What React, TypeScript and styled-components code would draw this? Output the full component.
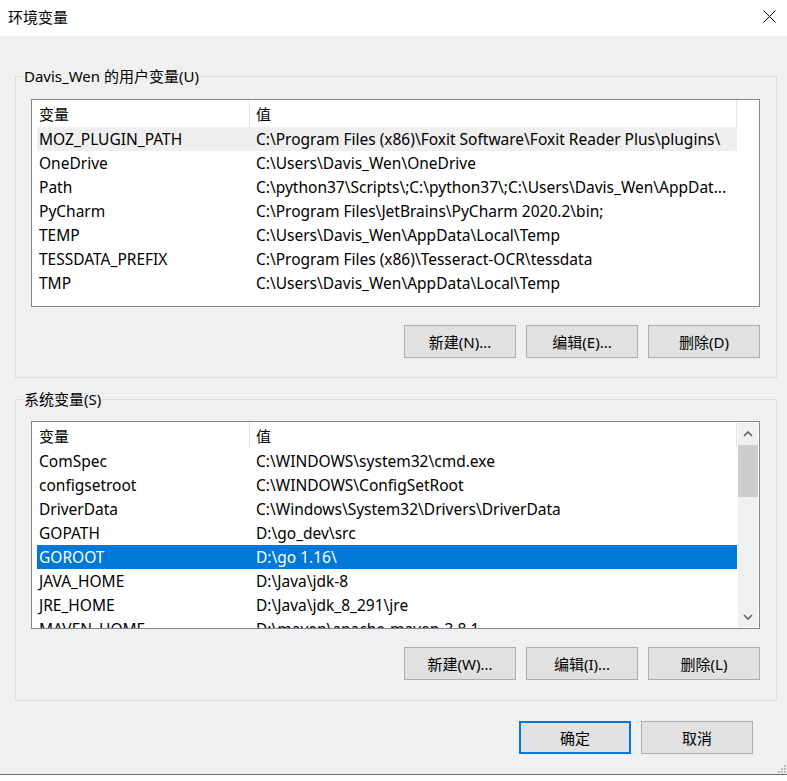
import React from "react";
import styled, { createGlobalStyle } from "styled-components";

type EnvVar = { name: string; value: string };
type RowState = "none" | "dim" | "active";

const userVars: EnvVar[] = [
  { name: "MOZ_PLUGIN_PATH", value: "C:\\Program Files (x86)\\Foxit Software\\Foxit Reader Plus\\plugins\\" },
  { name: "OneDrive", value: "C:\\Users\\Davis_Wen\\OneDrive" },
  { name: "Path", value: "C:\\python37\\Scripts\\;C:\\python37\\;C:\\Users\\Davis_Wen\\AppDat..." },
  { name: "PyCharm", value: "C:\\Program Files\\JetBrains\\PyCharm 2020.2\\bin;" },
  { name: "TEMP", value: "C:\\Users\\Davis_Wen\\AppData\\Local\\Temp" },
  { name: "TESSDATA_PREFIX", value: "C:\\Program Files (x86)\\Tesseract-OCR\\tessdata" },
  { name: "TMP", value: "C:\\Users\\Davis_Wen\\AppData\\Local\\Temp" },
];

const systemVars: EnvVar[] = [
  { name: "ComSpec", value: "C:\\WINDOWS\\system32\\cmd.exe" },
  { name: "configsetroot", value: "C:\\WINDOWS\\ConfigSetRoot" },
  { name: "DriverData", value: "C:\\Windows\\System32\\Drivers\\DriverData" },
  { name: "GOPATH", value: "D:\\go_dev\\src" },
  { name: "GOROOT", value: "D:\\go 1.16\\" },
  { name: "JAVA_HOME", value: "D:\\Java\\jdk-8" },
  { name: "JRE_HOME", value: "D:\\Java\\jdk_8_291\\jre" },
  { name: "MAVEN_HOME", value: "D:\\maven\\apache-maven-3.8.1" },
];

const GlobalStyle = createGlobalStyle`
  body {
    margin: 0;
    background: #fff;
    font-family: "Noto Sans", "Noto Sans CJK SC", sans-serif;
    color: #000;
  }
  * { box-sizing: border-box; }
`;

const Chevron = ({ down }: { down?: boolean }) => (
  <svg width="10" height="6" viewBox="0 0 10 6">
    <polyline
      points={down ? "1,1 5,5 9,1" : "1,5 5,1 9,5"}
      fill="none"
      stroke="#606060"
      strokeWidth="1.6"
    />
  </svg>
);

const VarList = ({
  rows,
  selected,
  selState,
  scroll,
}: {
  rows: EnvVar[];
  selected: number;
  selState: RowState;
  scroll?: boolean;
}) => (
  <ListFrame>
    <ListBody>
      <HeaderRow>
        <HeaderCell $w={213} $pad={2}>变量</HeaderCell>
        <HeaderCell $w={487} $pad={6}>值</HeaderCell>
      </HeaderRow>
      {rows.map((r, i) => (
        <DataRow key={r.name} $state={i === selected ? selState : "none"}>
          <Cell $w={213} $pad={2}>{r.name}</Cell>
          <Cell $w={487} $pad={6}>{r.value}</Cell>
        </DataRow>
      ))}
    </ListBody>
    {scroll && (
      <ScrollBar>
        <ArrowBtn>
          <Chevron />
        </ArrowBtn>
        <Thumb />
        <Track />
        <ArrowBtn>
          <Chevron down />
        </ArrowBtn>
      </ScrollBar>
    )}
  </ListFrame>
);

const App = () => {
  return (
    <Window>
      <GlobalStyle />
      <TitleBar>
        <Title>环境变量</Title>
        <CloseBtn>
          <svg width="13" height="13" viewBox="0 0 13 13">
            <path d="M0.5 0.5 L12.5 12.5 M12.5 0.5 L0.5 12.5" stroke="#000" strokeWidth="1" />
          </svg>
        </CloseBtn>
      </TitleBar>
      <Body>
        <GroupBox>
          <GroupLabel>Davis_Wen 的用户变量(U)</GroupLabel>
          <VarList rows={userVars} selected={0} selState="dim" />
          <ButtonRow>
            <Button>新建(N)...</Button>
            <Button>编辑(E)...</Button>
            <Button>删除(D)</Button>
          </ButtonRow>
        </GroupBox>
        <GroupBox $gapTop={21} $padTop={21} $padBottom={20}>
          <GroupLabel>系统变量(S)</GroupLabel>
          <VarList rows={systemVars} selected={4} selState="active" scroll />
          <ButtonRow>
            <Button>新建(W)...</Button>
            <Button>编辑(I)...</Button>
            <Button>删除(L)</Button>
          </ButtonRow>
        </GroupBox>
        <Footer>
          <Button $primary>确定</Button>
          <Button>取消</Button>
          <Grip>
            <svg width="10" height="10" viewBox="0 0 10 10">
              <rect x="7" y="1" width="2" height="2" fill="#bcbcbc" />
              <rect x="4" y="4" width="2" height="2" fill="#bcbcbc" />
              <rect x="7" y="4" width="2" height="2" fill="#bcbcbc" />
              <rect x="1" y="7" width="2" height="2" fill="#bcbcbc" />
              <rect x="4" y="7" width="2" height="2" fill="#bcbcbc" />
              <rect x="7" y="7" width="2" height="2" fill="#bcbcbc" />
            </svg>
          </Grip>
        </Footer>
      </Body>
    </Window>
  );
};

const Window = styled.div`
  width: 787px;
  display: flex;
  flex-direction: column;
  border-bottom: 1px solid #6e6e6e;
  box-shadow: 0 1px 0 #c8c8c8;
`;

const TitleBar = styled.div`
  height: 36px;
  background: #fff;
  display: flex;
  align-items: center;
  justify-content: space-between;
  padding: 0 11px 0 8px;
`;

const Title = styled.div`
  font-size: 15px;
  line-height: 20px;
  margin-top: -2px;
`;

const CloseBtn = styled.div`
  width: 13px;
  height: 13px;
  display: flex;
  margin-top: -3px;
`;

const Body = styled.div`
  background: #f0f0f0;
  height: 738px;
  padding: 40px 10px 0 15px;
  display: flex;
  flex-direction: column;
  position: relative;
`;

const GroupBox = styled.div<{ $gapTop?: number; $padTop?: number; $padBottom?: number }>`
  position: relative;
  margin-top: ${(p) => p.$gapTop ?? 0}px;
  border: 1px solid #dcdcdc;
  padding: ${(p) => p.$padTop ?? 22}px 16px ${(p) => p.$padBottom ?? 19}px 15px;
  display: flex;
  flex-direction: column;
`;

const GroupLabel = styled.div`
  position: absolute;
  top: -11px;
  left: 7px;
  padding: 0 1px;
  background: #f0f0f0;
  font-size: 15px;
  line-height: 20px;
  white-space: nowrap;
`;

const ListFrame = styled.div`
  width: 729px;
  height: 208px;
  border: 1px solid #828790;
  background: #fff;
  display: flex;
  overflow: hidden;
`;

const ListBody = styled.div`
  flex: 1;
  padding-left: 5px;
  display: flex;
  flex-direction: column;
  overflow: hidden;
`;

const HeaderRow = styled.div`
  height: 27px;
  flex-shrink: 0;
  display: flex;
`;

const HeaderCell = styled.div<{ $w: number; $pad: number }>`
  width: ${(p) => p.$w}px;
  flex-shrink: 0;
  padding: 2px 0 0 ${(p) => p.$pad}px;
  border-right: 1px solid #e5e5e5;
  font-size: 15px;
  line-height: 25px;
`;

const DataRow = styled.div<{ $state: RowState }>`
  height: 24px;
  width: 700px;
  flex-shrink: 0;
  display: flex;
  background: ${(p) =>
    p.$state === "active" ? "#0078d7" : p.$state === "dim" ? "#efefef" : "transparent"};
  color: ${(p) => (p.$state === "active" ? "#fff" : "#000")};
`;

const Cell = styled.div<{ $w: number; $pad: number }>`
  width: ${(p) => p.$w}px;
  flex-shrink: 0;
  padding-left: ${(p) => p.$pad}px;
  font-size: 15.5px;
  line-height: 24px;
  white-space: nowrap;
  overflow: hidden;
`;

const ScrollBar = styled.div`
  width: 20px;
  margin: 1px;
  background: #f0f0f0;
  display: flex;
  flex-direction: column;
`;

const ArrowBtn = styled.div`
  height: 21px;
  flex-shrink: 0;
  display: flex;
  align-items: center;
  justify-content: center;
`;

const Thumb = styled.div`
  height: 52px;
  margin-top: 1px;
  background: #cdcdcd;
`;

const Track = styled.div`
  flex: 1;
`;

const ButtonRow = styled.div`
  display: flex;
  justify-content: flex-end;
  gap: 10px;
  margin-top: 18px;
`;

const Button = styled.button<{ $primary?: boolean }>`
  width: 112px;
  height: 33px;
  background: #e1e1e1;
  border: ${(p) => (p.$primary ? "2px solid #0078d7" : "1px solid #adadad")};
  font-family: inherit;
  font-size: 15px;
  color: #000;
  padding: 0;
  display: flex;
  align-items: center;
  justify-content: center;
`;

const Footer = styled.div`
  display: flex;
  justify-content: flex-end;
  gap: 10px;
  padding: 20px 24px 0 0;
`;

const Grip = styled.div`
  position: absolute;
  right: 0;
  bottom: 0;
  width: 10px;
  height: 10px;
  display: flex;
`;

export default App;
